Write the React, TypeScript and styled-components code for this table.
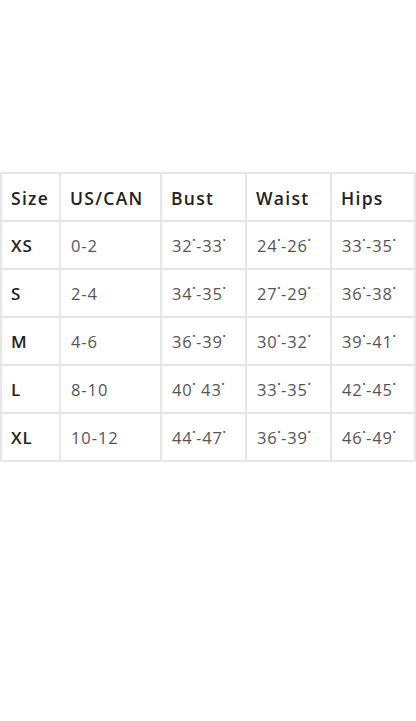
import React from "react";
import styled, { createGlobalStyle } from "styled-components";

const Global = createGlobalStyle`
  html, body { margin: 0; padding: 0; background: #ffffff; }
  body { font-family: "Open Sans", "Noto Sans", sans-serif; }
`;

const Page = styled.div`
  width: 416px;
  height: 721px;
  padding-top: 172px;
  box-sizing: border-box;
  background: #ffffff;
`;

const Grid = styled.div`
  display: grid;
  grid-template-columns: 57px 99px 83px 83px 82px;
  grid-auto-rows: 46px;
  gap: 2px;
  padding: 2px;
  width: 416px;
  box-sizing: border-box;
  background: #e6e6e6;
`;

const Cell = styled.div<{ $head?: boolean; $bold?: boolean }>`
  background: #ffffff;
  display: flex;
  align-items: center;
  padding-left: ${(p) => (p.$head || p.$bold ? "9px" : "10px")};
  padding-top: 1px;
  font-size: ${(p) => (p.$head ? "17.5px" : p.$bold ? "17px" : "16.5px")};
  font-weight: ${(p) => (p.$head || p.$bold ? 600 : 400)};
  color: ${(p) => (p.$head || p.$bold ? "#222222" : "#555555")};
  letter-spacing: ${(p) => (p.$head ? "1.3px" : p.$bold ? "0.8px" : "0.9px")};
  white-space: nowrap;
`;

const Mark = styled.span`
  font-size: 9px;
  position: relative;
  top: -6px;
  margin: 0 0.5px 0 -0.5px;
  letter-spacing: 0;
`;

const Gap = styled.span`
  display: inline-block;
  width: 5px;
`;

const headers = ["Size", "US/CAN", "Bust", "Waist", "Hips"];
const rows: [string, string, [number, number], [number, number], [number, number], boolean?][] = [
  ["XS", "0-2", [32, 33], [24, 26], [33, 35]],
  ["S", "2-4", [34, 35], [27, 29], [36, 38]],
  ["M", "4-6", [36, 39], [30, 32], [39, 41]],
  ["L", "8-10", [40, 43], [33, 35], [42, 45], true],
  ["XL", "10-12", [44, 47], [36, 39], [46, 49]],
];

const Range: React.FC<{ r: [number, number]; noDash?: boolean }> = ({ r, noDash }) => (
  <>
    {r[0]}
    <Mark>•</Mark>
    {noDash ? <Gap /> : "-"}
    {r[1]}
    <Mark>•</Mark>
  </>
);

export default function App() {
  return (
    <>
      <Global />
      <Page>
        <Grid>
          {headers.map((h) => (
            <Cell key={h} $head>
              {h}
            </Cell>
          ))}
          {rows.map((row) => (
            <React.Fragment key={row[0]}>
              <Cell $bold>{row[0]}</Cell>
              <Cell>{row[1]}</Cell>
              <Cell>
                <Range r={row[2]} noDash={row[5]} />
              </Cell>
              <Cell>
                <Range r={row[3]} />
              </Cell>
              <Cell>
                <Range r={row[4]} />
              </Cell>
            </React.Fragment>
          ))}
        </Grid>
      </Page>
    </>
  );
}
